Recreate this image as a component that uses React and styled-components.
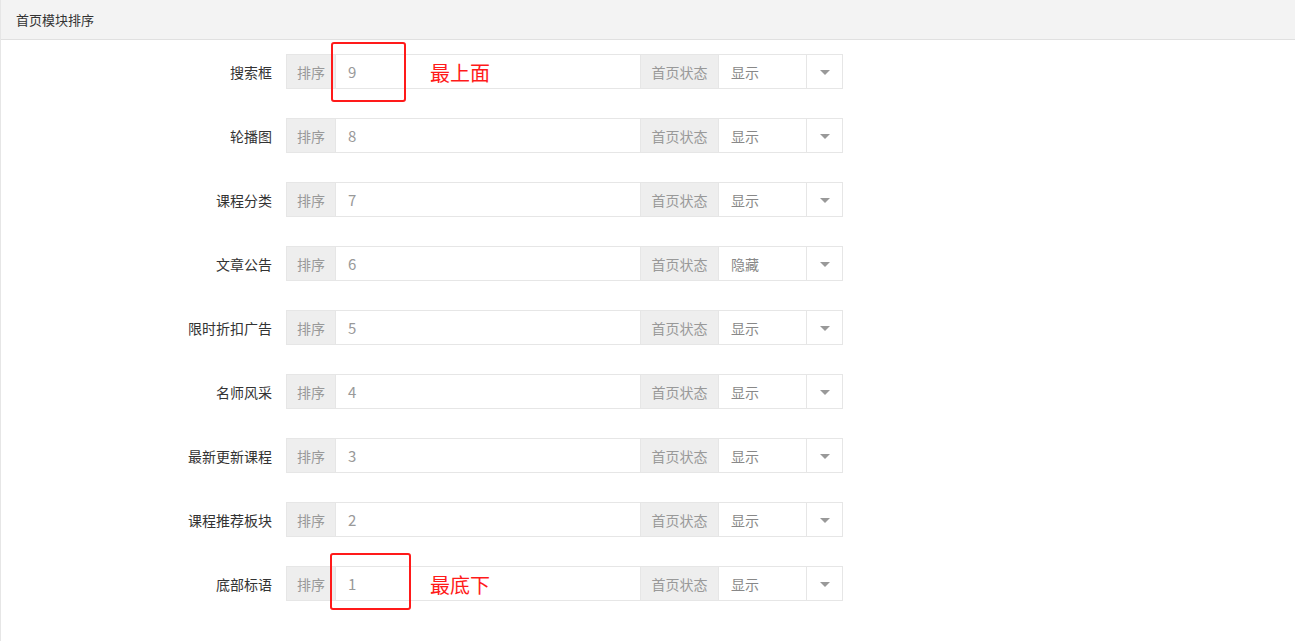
import React from "react";
import styled, { createGlobalStyle } from "styled-components";

const Global = createGlobalStyle`
  html, body { margin: 0; padding: 0; background: #fff; }
  body { font-family: "Noto Sans CJK SC", "Noto Sans", sans-serif; }
  * { box-sizing: border-box; }
`;

const Page = styled.div`
  width: 1295px;
  height: 641px;
  border-left: 1px solid #e6e6e6;
  background: #fff;
  overflow: hidden;
`;

const Header = styled.div`
  height: 40px;
  background: #f3f3f3;
  border-bottom: 1px solid #e0e0e0;
  display: flex;
  align-items: center;
  padding-left: 15px;
  font-size: 13px;
  color: #333;
`;

const Form = styled.div`
  display: flex;
  flex-direction: column;
  gap: 29px;
  padding-top: 14px;
`;

const Row = styled.div`
  display: flex;
  align-items: stretch;
  height: 35px;
`;

const Label = styled.div`
  width: 285px;
  padding-right: 14px;
  display: flex;
  align-items: center;
  justify-content: flex-end;
  font-size: 14px;
  color: #333;
`;

const Addon = styled.div`
  width: ${(p) => p.$w}px;
  display: flex;
  align-items: center;
  justify-content: center;
  background: #eeeeee;
  border: 1px solid #e6e6e6;
  border-right: none;
  font-size: 14px;
  color: #999;
`;

const InputCell = styled.div`
  position: relative;
  width: 305px;
  display: flex;
  align-items: center;
  padding-left: 12px;
  border: 1px solid #e6e6e6;
  border-right: none;
  font-size: 15px;
  color: #999;
`;

const Select = styled.div`
  width: 125px;
  display: flex;
  border: 1px solid #e6e6e6;
  font-size: 14px;
  color: #888;
`;

const SelectText = styled.div`
  flex: 1;
  display: flex;
  align-items: center;
  padding-left: 12px;
  border-right: 1px solid #e6e6e6;
`;

const Arrow = styled.div`
  width: 35px;
  display: flex;
  align-items: center;
  justify-content: center;
  &::after {
    content: "";
    border-left: 5px solid transparent;
    border-right: 5px solid transparent;
    border-top: 5px solid #999;
    margin-top: 1px;
  }
`;

const Mark = styled.div`
  position: absolute;
  left: ${(p) => p.$l}px;
  top: ${(p) => p.$t}px;
  width: ${(p) => p.$w}px;
  height: ${(p) => p.$h}px;
  border: 2.5px solid #ff1a1a;
  border-radius: 3px;
  pointer-events: none;
`;

const Note = styled.div`
  position: absolute;
  left: 94px;
  top: 50%;
  transform: translateY(-50%);
  font-size: 20px;
  font-weight: 400;
  color: #ff1a1a;
  white-space: nowrap;
`;

const rows = [
  { label: "搜索框", value: "9", status: "显示", mark: { l: -5, t: -13, w: 75, h: 60 }, note: "最上面" },
  { label: "轮播图", value: "8", status: "显示" },
  { label: "课程分类", value: "7", status: "显示" },
  { label: "文章公告", value: "6", status: "隐藏" },
  { label: "限时折扣广告", value: "5", status: "显示" },
  { label: "名师风采", value: "4", status: "显示" },
  { label: "最新更新课程", value: "3", status: "显示" },
  { label: "课程推荐板块", value: "2", status: "显示" },
  { label: "底部标语", value: "1", status: "显示", mark: { l: -6, t: -14, w: 81, h: 57 }, note: "最底下" },
];

export default function App() {
  return (
    <>
      <Global />
      <Page>
        <Header>首页模块排序</Header>
        <Form>
          {rows.map((r) => (
            <Row key={r.label}>
              <Label>{r.label}</Label>
              <Addon $w={49}>排序</Addon>
              <InputCell>
                {r.value}
                {r.mark && <Mark $l={r.mark.l} $t={r.mark.t} $w={r.mark.w} $h={r.mark.h} />}
                {r.note && <Note>{r.note}</Note>}
              </InputCell>
              <Addon $w={78}>首页状态</Addon>
              <Select>
                <SelectText>{r.status}</SelectText>
                <Arrow />
              </Select>
            </Row>
          ))}
        </Form>
      </Page>
    </>
  );
}
